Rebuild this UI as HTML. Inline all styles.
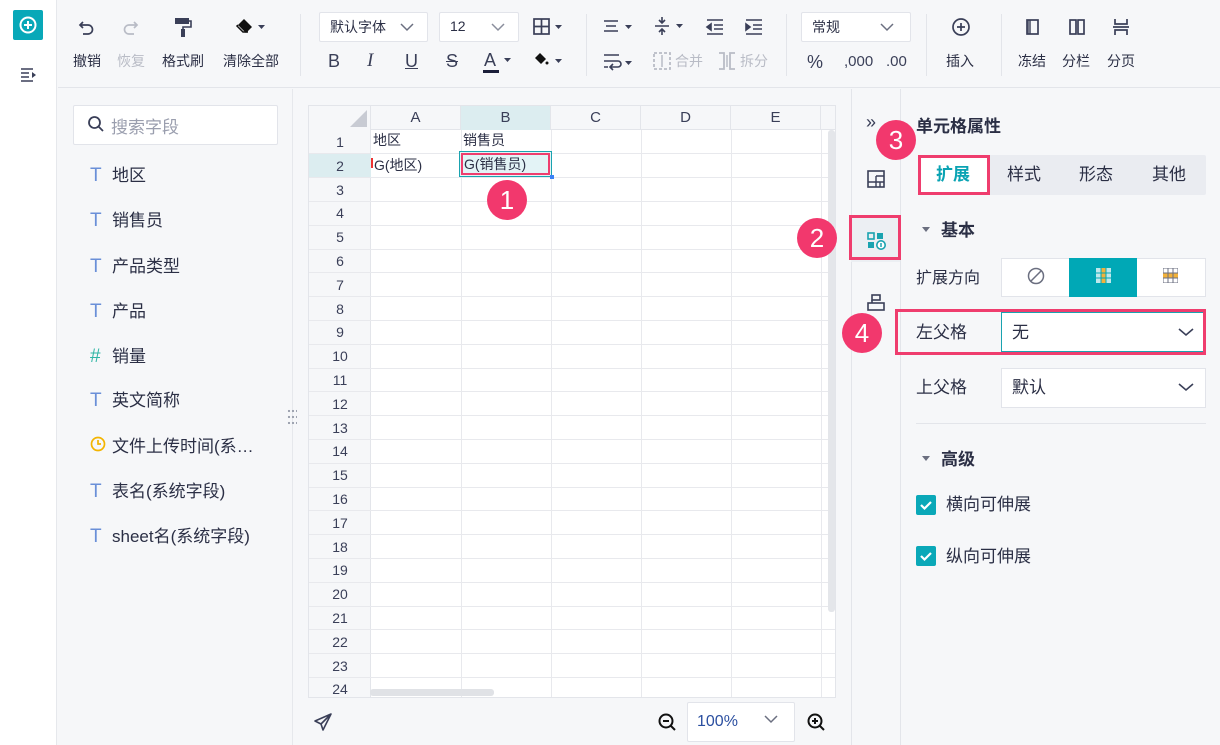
<!DOCTYPE html>
<html><head><meta charset="utf-8">
<style>
*{box-sizing:border-box;margin:0;padding:0}
body{width:1220px;height:745px;overflow:hidden;background:#f6f7f9;font-family:"Liberation Sans","Noto Sans CJK SC",sans-serif;color:#2b2f45;position:relative}
.a{position:absolute}
.t{font-size:14px;color:#2b2f45;white-space:nowrap}
.g{color:#b9bcc6}
.sel{background:#fff;border:1px solid #e2e4ea;border-radius:2px}
.badge{position:absolute;width:40px;height:40px;border-radius:50%;background:#f2386d;color:#fff;font-size:26px;text-align:center;line-height:40px}
.red{position:absolute;border:3px solid #ef3d6e}
.fi{position:absolute;left:90px;font-size:17px;color:#2b2f45}
.fi b{font-weight:normal;color:#6a8fd8;display:inline-block;width:22px;font-size:19px}
</style></head><body>
<div class="a" style="left:0;top:0;width:57px;height:745px;background:#fff;border-right:1px solid #e6e8ec"></div>
<div class="a" style="left:13px;top:10px;width:30px;height:30px;background:#08a8b8;border-radius:2px"></div>
<svg class="a" style="left:17px;top:14px" width="22" height="22" viewBox="0 0 22 22"><circle cx="11" cy="11" r="7.5" fill="none" stroke="#fff" stroke-width="2"/><path d="M11 7v8M7 11h8" stroke="#fff" stroke-width="2"/></svg>
<svg class="a" style="left:20px;top:67px" width="18" height="16" viewBox="0 0 18 16"><path d="M1 2h12M1 6h8M1 10h8M1 14h12" stroke="#3a3f58" stroke-width="1.6"/><path d="M12 5l4 3-4 3z" fill="#3a3f58"/></svg>
<div class="a" style="left:58px;top:0;width:1162px;height:88px;background:#f6f7f9;border-bottom:1px solid #e3e5ea"></div>
<svg class="a" style="left:77px;top:18px" width="20" height="20" viewBox="0 0 20 20"><path d="M6 4L3 7l3 3M3 7h8a4.5 4.5 0 010 9H6" fill="none" stroke="#3a3f58" stroke-width="1.7"/></svg>
<svg class="a" style="left:120px;top:18px" width="20" height="20" viewBox="0 0 20 20"><path d="M14 4l3 3-3 3M17 7H9a4.5 4.5 0 000 9h5" fill="none" stroke="#b9bcc6" stroke-width="1.7"/></svg>
<svg class="a" style="left:173px;top:16px" width="20" height="22" viewBox="0 0 20 22"><rect x="2" y="2" width="14" height="6" fill="#3a3f58"/><path d="M16 5h2v6h-8v3" fill="none" stroke="#3a3f58" stroke-width="1.6"/><rect x="8" y="13" width="4" height="8" fill="#3a3f58"/></svg>
<svg class="a" style="left:235px;top:17px" width="34" height="20" viewBox="0 0 34 20"><path d="M9 2l8 8-6 6-8-8z" fill="#111"/><path d="M3 8l-1 1 6 6h5" fill="none" stroke="#111" stroke-width="1.5"/><path d="M23 8h7l-3.5 4z" fill="#3a3f58"/></svg>
<div class="a t" style="left:73px;top:51px">撤销</div>
<div class="a t g" style="left:117px;top:51px">恢复</div>
<div class="a t" style="left:162px;top:51px">格式刷</div>
<div class="a t" style="left:223px;top:51px">清除全部</div>
<div class="a" style="left:300px;top:14px;width:1px;height:62px;background:#e3e5ea"></div>
<div class="a sel" style="left:319px;top:12px;width:109px;height:30px"></div>
<div class="a t" style="left:330px;top:17px">默认字体</div>
<svg class="a" style="left:399px;top:21px" width="16" height="12"><path d="M2 3l6 6 6-6" fill="none" stroke="#6b6f80" stroke-width="1.5"/></svg>
<div class="a sel" style="left:439px;top:12px;width:80px;height:30px"></div>
<div class="a t" style="left:450px;top:18px">12</div>
<svg class="a" style="left:490px;top:21px" width="16" height="12"><path d="M2 3l6 6 6-6" fill="none" stroke="#8a8e9c" stroke-width="1.5"/></svg>
<svg class="a" style="left:532px;top:17px" width="34" height="20" viewBox="0 0 34 20"><rect x="2" y="2" width="15" height="15" fill="none" stroke="#3a3f58" stroke-width="1.7"/><path d="M9.5 2v15M2 9.5h15" stroke="#3a3f58" stroke-width="1.7"/><path d="M23 8h7l-3.5 4z" fill="#3a3f58"/></svg>
<div class="a" style="left:328px;top:51px;font-size:18px;color:#3a3f58">B</div>
<div class="a" style="left:367px;top:50px;font-size:19px;color:#3a3f58;font-style:italic;font-family:'Liberation Serif',serif">I</div>
<div class="a" style="left:405px;top:51px;font-size:18px;color:#3a3f58;text-decoration:underline">U</div>
<div class="a" style="left:446px;top:51px;font-size:18px;color:#3a3f58;text-decoration:line-through">S</div>
<div class="a" style="left:484px;top:50px;font-size:18px;color:#3a3f58">A</div>
<div class="a" style="left:483px;top:70px;width:16px;height:3px;background:#1b1f3a"></div>
<svg class="a" style="left:503px;top:56px" width="10" height="8"><path d="M1 2h7l-3.5 4z" fill="#3a3f58"/></svg>
<svg class="a" style="left:532px;top:50px" width="34" height="22" viewBox="0 0 34 22"><path d="M8 3l6 6-5 5-6-6z" fill="#111"/><circle cx="15" cy="13" r="1.5" fill="#111"/><path d="M23 9h7l-3.5 4z" fill="#3a3f58"/></svg>
<div class="a" style="left:586px;top:14px;width:1px;height:62px;background:#e3e5ea"></div>
<svg class="a" style="left:603px;top:17px" width="36" height="20" viewBox="0 0 36 20"><path d="M1 4h14M3 9h10M1 14h14" stroke="#3a3f58" stroke-width="1.6"/><path d="M22 8h7l-3.5 4z" fill="#3a3f58"/></svg>
<svg class="a" style="left:654px;top:15px" width="34" height="22" viewBox="0 0 34 22"><path d="M1 11h14M8 2v6M8 14v6M5 5l3 3 3-3M5 17l3-3 3 3" fill="none" stroke="#3a3f58" stroke-width="1.6"/><path d="M22 9h7l-3.5 4z" fill="#3a3f58"/></svg>
<svg class="a" style="left:705px;top:17px" width="20" height="20" viewBox="0 0 20 20"><path d="M2 3h16M9 8h9M9 12h9M2 17h16M6 7L2 10l4 3z" stroke="#3a3f58" stroke-width="1.6" fill="#3a3f58"/></svg>
<svg class="a" style="left:744px;top:17px" width="20" height="20" viewBox="0 0 20 20"><path d="M2 3h16M9 8h9M9 12h9M2 17h16M2 7l4 3-4 3z" stroke="#3a3f58" stroke-width="1.6" fill="#3a3f58"/></svg>
<svg class="a" style="left:603px;top:52px" width="36" height="20" viewBox="0 0 36 20"><path d="M1 3h15M1 9h14a3 3 0 010 6H8M1 15h4M10 12l-3 3 3 3" fill="none" stroke="#3a3f58" stroke-width="1.6"/><path d="M22 9h7l-3.5 4z" fill="#3a3f58"/></svg>
<svg class="a" style="left:653px;top:52px" width="18" height="18" viewBox="0 0 18 18"><rect x="1" y="1" width="16" height="16" fill="none" stroke="#b9bcc6" stroke-width="1.8" stroke-dasharray="3 2"/><path d="M9 3v12" stroke="#b9bcc6" stroke-width="1.5"/></svg>
<div class="a t g" style="left:675px;top:51px">合并</div>
<svg class="a" style="left:718px;top:52px" width="18" height="18" viewBox="0 0 18 18"><path d="M1 1h5v16H1M17 1h-5v16h5" fill="none" stroke="#b9bcc6" stroke-width="1.8"/><path d="M9 3v12" stroke="#b9bcc6" stroke-width="1.5"/></svg>
<div class="a t g" style="left:740px;top:51px">拆分</div>
<div class="a" style="left:786px;top:14px;width:1px;height:62px;background:#e3e5ea"></div>
<div class="a sel" style="left:801px;top:12px;width:110px;height:30px"></div>
<div class="a t" style="left:812px;top:17px">常规</div>
<svg class="a" style="left:879px;top:21px" width="16" height="12"><path d="M2 3l6 6 6-6" fill="none" stroke="#6b6f80" stroke-width="1.5"/></svg>
<div class="a" style="left:807px;top:52px;font-size:18px;color:#3a3f58">%</div>
<div class="a" style="left:844px;top:53px;font-size:15px;color:#3a3f58">,000</div>
<div class="a" style="left:886px;top:53px;font-size:15px;color:#3a3f58">.00</div>
<div class="a" style="left:926px;top:14px;width:1px;height:62px;background:#e3e5ea"></div>
<svg class="a" style="left:951px;top:17px" width="20" height="20" viewBox="0 0 20 20"><circle cx="10" cy="10" r="8" fill="none" stroke="#3a3f58" stroke-width="1.7"/><path d="M10 6v8M6 10h8" stroke="#3a3f58" stroke-width="1.7"/></svg>
<div class="a t" style="left:946px;top:51px">插入</div>
<div class="a" style="left:1001px;top:14px;width:1px;height:62px;background:#e3e5ea"></div>
<svg class="a" style="left:1024px;top:18px" width="18" height="18" viewBox="0 0 18 18"><rect x="3" y="2" width="11" height="14" fill="none" stroke="#3a3f58" stroke-width="1.7"/><rect x="3" y="2" width="4" height="14" fill="#3a3f58" opacity=".7"/></svg>
<svg class="a" style="left:1068px;top:18px" width="18" height="18" viewBox="0 0 18 18"><rect x="2" y="2" width="6" height="14" fill="none" stroke="#3a3f58" stroke-width="1.7"/><rect x="10" y="2" width="6" height="14" fill="none" stroke="#3a3f58" stroke-width="1.7"/></svg>
<svg class="a" style="left:1112px;top:18px" width="18" height="18" viewBox="0 0 18 18"><path d="M3 1v5h12V1M3 17v-5h12v5M1 9h16" fill="none" stroke="#3a3f58" stroke-width="1.7"/></svg>
<div class="a t" style="left:1018px;top:51px">冻结</div>
<div class="a t" style="left:1062px;top:51px">分栏</div>
<div class="a t" style="left:1107px;top:51px">分页</div>
<div class="a" style="left:292px;top:89px;width:1px;height:656px;background:#e6e8ec"></div>
<div class="a sel" style="left:73px;top:105px;width:205px;height:40px"></div>
<svg class="a" style="left:87px;top:115px" width="18" height="18" viewBox="0 0 18 18"><circle cx="7.5" cy="7.5" r="5.5" fill="none" stroke="#3a3f58" stroke-width="1.8"/><path d="M11.5 11.5l4.5 4.5" stroke="#3a3f58" stroke-width="1.8"/></svg>
<div class="a" style="left:111px;top:113px;font-size:17px;color:#9a9eae">搜索字段</div>
<div class="fi" style="top:161px"><b>T</b>地区</div>
<div class="fi" style="top:206px"><b>T</b>销售员</div>
<div class="fi" style="top:252px"><b>T</b>产品类型</div>
<div class="fi" style="top:297px"><b>T</b>产品</div>
<div class="fi" style="top:342px"><b style="color:#2fb5a5">#</b>销量</div>
<div class="fi" style="top:386px"><b>T</b>英文简称</div>
<div class="fi" style="top:432px"><b><svg width="16" height="16" viewBox="0 0 16 16"><circle cx="8" cy="8" r="6.5" fill="none" stroke="#f3b400" stroke-width="1.7"/><path d="M8 4v4h3" fill="none" stroke="#f3b400" stroke-width="1.7"/></svg></b>文件上传时间(系…</div>
<div class="fi" style="top:477px"><b>T</b>表名(系统字段)</div>
<div class="fi" style="top:522px"><b>T</b>sheet名(系统字段)</div>
<div class="a" style="left:287px;top:408px;width:10px;height:18px;background:radial-gradient(circle,#9aa0ad 1px,transparent 1.3px) 0 0/4px 6px"></div>
<div class="a" style="left:308px;top:105px;width:528px;height:593px;background:#fff;border:1px solid #e3e5ea;overflow:hidden" id="g">
<div class="a" style="left:0;top:0;width:528px;height:24px;background:#f6f7f9;border-bottom:1px solid #e3e5ea"></div>
<div class="a" style="left:0;top:0;width:62px;height:593px;background:#f6f7f9;border-right:1px solid #e3e5ea"></div>
<svg class="a" style="left:41px;top:4px" width="17" height="17"><path d="M17 0v17H0z" fill="#c8cbd3"/></svg>
<div class="a" style="left:151px;top:0;width:90px;height:24px;background:#dcedf0"></div>
<div class="a" style="left:0;top:47px;width:62px;height:24px;background:#dcedf0"></div>
</div>
<script>
var g=document.getElementById('g'),h='';
var xs=[62,152,242,332,422,512],L=['A','B','C','D','E'];
for(var i=0;i<5;i++){h+='<div class="a" style="left:'+xs[i]+'px;top:0;width:90px;height:24px;line-height:24px;text-align:center;font-size:15px;color:#3a3f58;border-right:1px solid #e3e5ea">'+L[i]+'</div>';}
for(var i=1;i<=6;i++){h+='<div class="a" style="left:'+(xs[i]||512)+'px;top:24px;width:1px;height:569px;background:#e8e9ed"></div>';}
for(var r=0;r<24;r++){var y=24+r*23.8;h+='<div class="a" style="left:0;top:'+y+'px;width:62px;height:23.8px;line-height:24px;text-align:center;font-size:14px;color:#3a3f58">'+(r+1)+'</div><div class="a" style="left:0;top:'+(y+23.3)+'px;width:528px;height:1px;background:#e8e9ed"></div>';}
g.insertAdjacentHTML('beforeend',h);
</script>
<div class="a" style="left:373px;top:130px;font-size:14px">地区</div>
<div class="a" style="left:463px;top:130px;font-size:14px">销售员</div>
<div class="a" style="left:374px;top:155px;font-size:14px">G(地区)</div>
<div class="a" style="left:371px;top:158px;width:2px;height:10px;background:#e33"></div>
<div class="a" style="left:459px;top:151px;width:93px;height:26px;border:1px solid #1aa3b0;background:#e3f3f6"></div>
<div class="a" style="left:550px;top:175px;width:4px;height:4px;background:#3b82f6"></div>
<div class="red" style="left:461px;top:153px;width:89px;height:22px;border-width:2px"></div>
<div class="a" style="left:464px;top:154px;font-size:14px">G(销售员)</div>
<div class="badge" style="left:487px;top:180px">1</div>
<div class="a" style="left:828px;top:130px;width:7px;height:482px;background:#e4e6ea;border-radius:3px"></div>
<div class="a" style="left:370px;top:689px;width:124px;height:7px;background:#e0e2e6;border-radius:3px"></div>
<svg class="a" style="left:313px;top:712px" width="20" height="20" viewBox="0 0 20 20"><path d="M18 2L2 9l6 3 2 6z M8 12l10-10" fill="none" stroke="#3a3f58" stroke-width="1.6" stroke-linejoin="round"/></svg>
<svg class="a" style="left:657px;top:712px" width="20" height="20" viewBox="0 0 20 20"><circle cx="9" cy="9" r="6.5" fill="none" stroke="#111" stroke-width="2"/><path d="M6 9h6M14 14l4 4" stroke="#111" stroke-width="2"/></svg>
<div class="a sel" style="left:687px;top:702px;width:108px;height:40px"></div>
<div class="a" style="left:697px;top:713px;font-size:16px;color:#2b4fa0">100%</div>
<svg class="a" style="left:763px;top:713px" width="16" height="12"><path d="M2 3l6 6 6-6" fill="none" stroke="#6b6f80" stroke-width="1.5"/></svg>
<svg class="a" style="left:806px;top:712px" width="20" height="20" viewBox="0 0 20 20"><circle cx="9" cy="9" r="6.5" fill="none" stroke="#111" stroke-width="2"/><path d="M6 9h6M9 6v6M14 14l4 4" stroke="#111" stroke-width="2"/></svg>
<div class="a" style="left:851px;top:89px;width:1px;height:656px;background:#e3e5ea"></div>
<div class="a" style="left:900px;top:89px;width:1px;height:656px;background:#e3e5ea"></div>
<div class="a" style="left:866px;top:112px;font-size:18px;color:#3a3f58">»</div>
<svg class="a" style="left:867px;top:170px" width="18" height="18" viewBox="0 0 18 18"><rect x="1" y="1" width="16" height="16" fill="none" stroke="#3a3f58" stroke-width="1.6"/><path d="M1 12h16M9 6v11M13 12v5M9 6h8" stroke="#3a3f58" stroke-width="1.4"/></svg>
<div class="a" style="left:851px;top:218px;width:49px;height:44px;background:#eceff3"></div>
<div class="red" style="left:849px;top:215px;width:52px;height:45px"></div>
<svg class="a" style="left:867px;top:232px" width="20" height="18" viewBox="0 0 20 18"><rect x="1" y="1" width="6" height="6" fill="none" stroke="#1aa3b0" stroke-width="1.6"/><rect x="10" y="1" width="6" height="6" fill="#1aa3b0"/><rect x="1" y="10" width="6" height="6" fill="#1aa3b0"/><circle cx="14" cy="13" r="4.2" fill="#fff" stroke="#1aa3b0" stroke-width="1.6"/><path d="M14 11v4" stroke="#1aa3b0" stroke-width="1.5"/></svg>
<svg class="a" style="left:867px;top:294px" width="18" height="18" viewBox="0 0 18 18"><rect x="5" y="1" width="8" height="5" fill="none" stroke="#3a3f58" stroke-width="1.6"/><rect x="1" y="9" width="16" height="7" fill="none" stroke="#3a3f58" stroke-width="1.6"/><path d="M5 6v3" stroke="#3a3f58" stroke-width="1.6"/></svg>
<div class="badge" style="left:797px;top:218px">2</div>
<div class="a" style="left:916px;top:112px;font-size:17px;font-weight:bold">单元格属性</div>
<div class="badge" style="left:876px;top:120px">3</div>
<div class="a" style="left:918px;top:155px;width:288px;height:40px;background:#eaecf1;border-radius:2px"></div>
<div class="a" style="left:918px;top:155px;width:72px;height:40px;background:#fff;border:3px solid #ef3d6e"></div>
<div class="a" style="left:936px;top:160px;font-size:17px;font-weight:bold;color:#0aa3b3">扩展</div>
<div class="a" style="left:1007px;top:160px;font-size:17px">样式</div>
<div class="a" style="left:1079px;top:160px;font-size:17px">形态</div>
<div class="a" style="left:1152px;top:160px;font-size:17px">其他</div>
<svg class="a" style="left:921px;top:226px" width="10" height="8"><path d="M1 1h8L5 6z" fill="#6b6f80"/></svg>
<div class="a" style="left:941px;top:216px;font-size:17px;font-weight:bold">基本</div>
<div class="a t" style="left:916px;top:264px;font-size:16px">扩展方向</div>
<div class="a" style="left:1001px;top:258px;width:205px;height:39px;background:#fff;border:1px solid #e2e4ea"></div>
<div class="a" style="left:1069px;top:258px;width:68px;height:39px;background:#00a8b6"></div>
<svg class="a" style="left:1026px;top:266px" width="20" height="20"><circle cx="10" cy="10" r="7.5" fill="none" stroke="#6b6f80" stroke-width="1.5"/><path d="M5 15L15 5" stroke="#6b6f80" stroke-width="1.5"/></svg>
<svg class="a" style="left:1096px;top:268px" width="15" height="15" viewBox="0 0 15 15"><rect width="15" height="15" fill="#bfe8ec"/><rect x="5" y="0" width="5" height="15" fill="#f2b23b"/><path d="M0 5h15M0 10h15M5 0v15M10 0v15" stroke="#00a8b6" stroke-width="1"/></svg>
<svg class="a" style="left:1163px;top:268px" width="15" height="15" viewBox="0 0 15 15"><rect width="15" height="15" fill="#fff" stroke="#6b6f80"/><rect x="0" y="5" width="15" height="5" fill="#f2b23b"/><path d="M0 5h15M0 10h15M5 0v15M10 0v15" stroke="#6b6f80" stroke-width="1"/></svg>
<div class="a" style="left:1001px;top:312px;width:204px;height:40px;background:#fff;border:1px solid #1aa3b0"></div>
<div class="red" style="left:895px;top:309px;width:311px;height:46px"></div>
<div class="a t" style="left:916px;top:318px;font-size:17px">左父格</div>
<div class="a t" style="left:1012px;top:318px;font-size:17px">无</div>
<svg class="a" style="left:1177px;top:326px" width="18" height="12"><path d="M2 3l7 6 7-6" fill="none" stroke="#3a3f58" stroke-width="1.6"/></svg>
<div class="badge" style="left:842px;top:313px">4</div>
<div class="a" style="left:1001px;top:368px;width:205px;height:40px;background:#fff;border:1px solid #e2e4ea"></div>
<div class="a t" style="left:916px;top:373px;font-size:17px">上父格</div>
<div class="a t" style="left:1012px;top:373px;font-size:17px">默认</div>
<svg class="a" style="left:1177px;top:381px" width="18" height="12"><path d="M2 3l7 6 7-6" fill="none" stroke="#3a3f58" stroke-width="1.6"/></svg>
<div class="a" style="left:916px;top:423px;width:290px;height:1px;background:#e3e5ea"></div>
<svg class="a" style="left:921px;top:455px" width="10" height="8"><path d="M1 1h8L5 6z" fill="#6b6f80"/></svg>
<div class="a" style="left:941px;top:445px;font-size:17px;font-weight:bold">高级</div>
<svg class="a" style="left:916px;top:495px" width="20" height="20"><rect width="20" height="20" rx="2" fill="#0aa8b8"/><path d="M5 10l3.5 3.5L15 7" fill="none" stroke="#fff" stroke-width="2.2"/></svg>
<div class="a t" style="left:946px;top:490px;font-size:17px">横向可伸展</div>
<svg class="a" style="left:916px;top:546px" width="20" height="20"><rect width="20" height="20" rx="2" fill="#0aa8b8"/><path d="M5 10l3.5 3.5L15 7" fill="none" stroke="#fff" stroke-width="2.2"/></svg>
<div class="a t" style="left:946px;top:542px;font-size:17px">纵向可伸展</div>
</body></html>
